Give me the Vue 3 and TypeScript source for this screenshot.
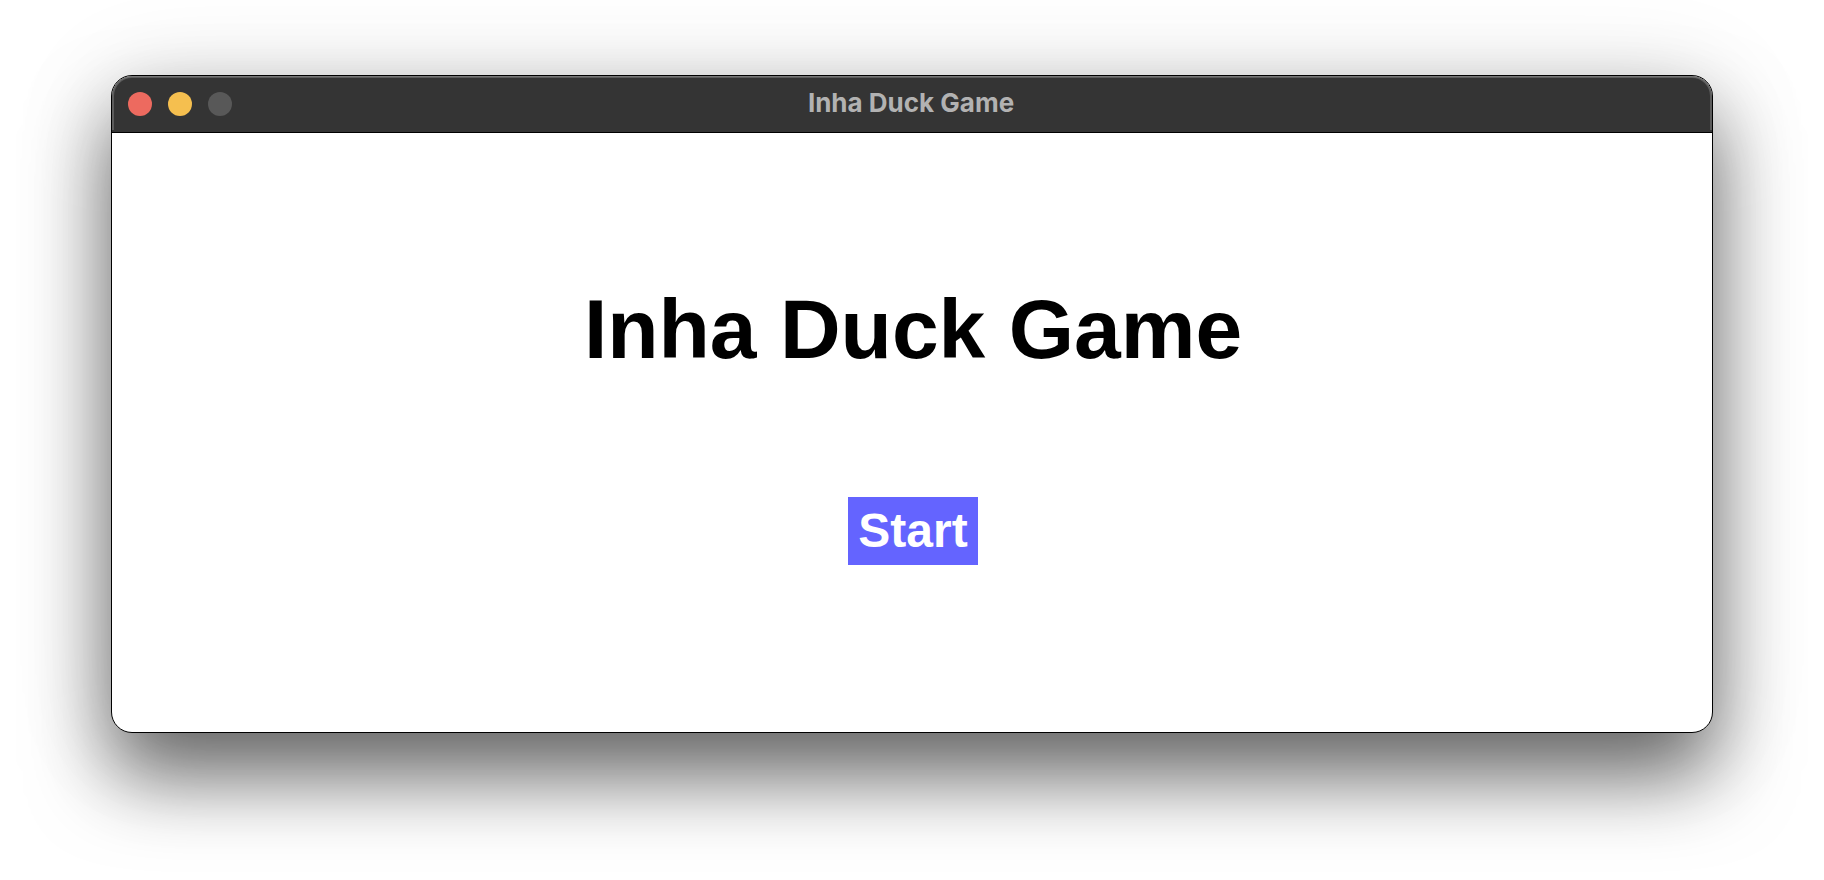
<script setup lang="ts">
import { ref } from 'vue'

const title = 'Inha Duck Game'
const started = ref(false)
</script>

<template>
  <div class="desktop">
    <div class="window">
      <header class="titlebar">
        <div class="controls">
          <button type="button" class="dot close" aria-label="Close"></button>
          <button type="button" class="dot minimize" aria-label="Minimize"></button>
          <button type="button" class="dot zoom" aria-label="Zoom" disabled></button>
        </div>
        <span class="caption">{{ title }}</span>
      </header>
      <main class="stage">
        <h1 class="heading">{{ title }}</h1>
        <button type="button" class="start" :aria-pressed="started" @click="started = true">Start</button>
      </main>
    </div>
  </div>
</template>

<style>
body {
  margin: 0;
  background: #fff;
}
</style>

<style scoped>
.desktop {
  box-sizing: border-box;
  min-height: 100vh;
  padding: 75px 111px 147px;
  display: flex;
  overflow: hidden;
}

.window {
  flex: 1;
  display: flex;
  flex-direction: column;
  border: 1px solid #000;
  border-radius: 21px;
  background: #fff;
  overflow: hidden;
  box-shadow: 0 44px 80px rgba(0, 0, 0, 0.56), 0 8px 100px rgba(0, 0, 0, 0.14);
}

.titlebar {
  box-sizing: border-box;
  height: 57px;
  padding: 0 16px;
  display: grid;
  grid-template-columns: 1fr auto 1fr;
  align-items: center;
  background: #343434;
  border-bottom: 1px solid #000;
  border-radius: 20px 20px 0 0;
  box-shadow: inset 0 -2px 0 #343434, inset 0 1px 0 #777, inset 0 0 0 2px #5c5c5c;
}

.controls {
  display: flex;
  gap: 16px;
}

.dot {
  width: 24px;
  height: 24px;
  padding: 0;
  border: 0;
  border-radius: 50%;
}

.close {
  background: #ed6a5f;
}

.minimize {
  background: #f5bf4f;
}

.zoom {
  background: #585858;
}

.caption {
  padding: 0 2px 2px 0;
  font: 700 26px/32px Inter, "Liberation Sans", sans-serif;
  color: #b2b2b2;
}

.stage {
  flex: 1;
  display: flex;
  flex-direction: column;
  align-items: center;
  justify-content: center;
  gap: 120px;
  padding: 0 0 20px 2px;
  font-family: "Liberation Sans", Arial, sans-serif;
}

.heading {
  margin: 0;
  font-size: 84px;
  line-height: 96px;
  font-weight: 700;
  color: #000;
}

.start {
  padding: 6px 10px;
  border: 0;
  background: #6464ff;
  color: #fff;
  font: 700 48px/56px "Liberation Sans", Arial, sans-serif;
}
</style>
